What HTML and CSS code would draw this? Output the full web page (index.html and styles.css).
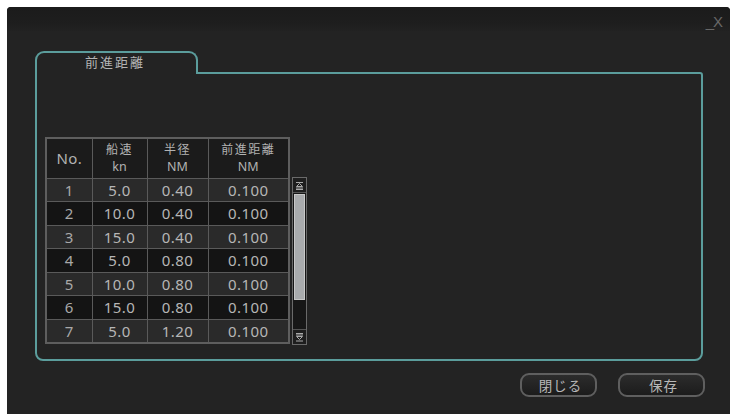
FILE: index.html
```html
<!DOCTYPE html>
<html lang="ja">
<head>
<meta charset="utf-8">
<link rel="stylesheet" href="styles.css">
</head>
<body>
<div class="window">
  <div class="titlebar">
    <span class="winctl">_X</span>
  </div>
  <div class="panel">
    <div class="tabs">
      <div class="tab">前進距離</div>
    </div>
    <div class="panel-body">
      <div class="table-wrap">
        <table class="grid">
          <thead>
            <tr>
              <th class="c-no">No.</th>
              <th class="c-sp"><span class="hl jp">船速</span><span class="hl">kn</span></th>
              <th class="c-r"><span class="hl jp">半径</span><span class="hl">NM</span></th>
              <th class="c-d"><span class="hl jp">前進距離</span><span class="hl">NM</span></th>
            </tr>
          </thead>
          <tbody>
            <tr class="odd"><td>1</td><td>5.0</td><td>0.40</td><td>0.100</td></tr>
            <tr class="even"><td>2</td><td>10.0</td><td>0.40</td><td>0.100</td></tr>
            <tr class="odd"><td>3</td><td>15.0</td><td>0.40</td><td>0.100</td></tr>
            <tr class="even"><td>4</td><td>5.0</td><td>0.80</td><td>0.100</td></tr>
            <tr class="odd"><td>5</td><td>10.0</td><td>0.80</td><td>0.100</td></tr>
            <tr class="even"><td>6</td><td>15.0</td><td>0.80</td><td>0.100</td></tr>
            <tr class="odd"><td>7</td><td>5.0</td><td>1.20</td><td>0.100</td></tr>
          </tbody>
        </table>
        <div class="scrollbar">
          <div class="sb-btn">
            <svg width="11" height="11" viewBox="0 0 11 11"><path d="M2 2.5h7M5.5 3.5 2.5 6.5h6z M2 8h7M2 9.5h7" stroke="#aaa" stroke-width="1" fill="none"/></svg>
          </div>
          <div class="sb-track">
            <div class="sb-thumb"></div>
          </div>
          <div class="sb-btn">
            <svg width="11" height="11" viewBox="0 0 11 11"><path d="M2 1.5h7M2 3h7M2.5 4.5h6L5.5 7.5z M2 9h7" stroke="#aaa" stroke-width="1" fill="none"/></svg>
          </div>
        </div>
      </div>
    </div>
  </div>
  <div class="footer">
    <button class="btn btn-close">閉じる</button>
    <button class="btn btn-save">保存</button>
  </div>
</div>
</body>
</html>
```

FILE: styles.css
```css
* { box-sizing: border-box; }

html, body {
  margin: 0;
  padding: 0;
  background: #ffffff;
}

body {
  font-family: "Noto Sans", "Noto Sans CJK JP", sans-serif;
  color: #bdbdbd;
}

.window {
  margin: 7px 5px 0 7px;
  height: 407px;
  background: #232323;
  border-radius: 4px 4px 0 0;
  display: flex;
  flex-direction: column;
}

.titlebar {
  height: 24px;
  background: linear-gradient(#1b1b1b, #1e1e1e 70%, #222222);
  border-radius: 4px 4px 0 0;
  display: flex;
  justify-content: flex-end;
  align-items: center;
  padding: 4px 8px 0 0;
}

.winctl {
  font-family: "Liberation Sans", sans-serif;
  font-size: 15px;
  color: #686868;
  letter-spacing: -1px;
}

.panel {
  margin: 20px 27px 0 28px;
  display: flex;
  flex-direction: column;
}

.tabs {
  display: flex;
  height: 21px;
}

.tab {
  position: relative;
  z-index: 1;
  width: 163px;
  height: 23px;
  border: 2px solid #5b9d9c;
  border-bottom: none;
  border-radius: 9px 9px 0 0;
  background: #232323;
  font-family: "Noto Sans CJK JP", sans-serif;
  font-size: 13px;
  letter-spacing: 2px;
  color: #b3b3b3;
  padding: 1px 0 0 48px;
  line-height: 16px;
}

.panel-body {
  height: 289px;
  border: 2px solid #5b9d9c;
  border-radius: 0 3px 8px 8px;
  padding: 63px 0 0 8px;
}

.table-wrap {
  display: flex;
  align-items: flex-start;
}

.grid {
  border-collapse: collapse;
  border: 2px solid #5e5e5e;
  font-size: 15px;
  letter-spacing: 0.4px;
  color: #b6b6b6;
}

.grid th, .grid td {
  border: 1px solid #5a5a5a;
  text-align: center;
  padding: 0;
}

.grid th {
  height: 40px;
  background: #1b1b1b;
  font-family: "Noto Sans", "Noto Sans CJK JP", sans-serif;
  font-weight: normal;
  color: #b2b2b2;
}

.hl {
  display: block;
  font-size: 12.5px;
  line-height: 18px;
  letter-spacing: 0;
}

.hl.jp {
  font-family: "Noto Sans CJK JP", sans-serif;
  font-size: 12px;
  letter-spacing: 1.5px;
}

.grid th.c-no {
  font-size: 15px;
}

.c-no { width: 46px; }
.c-sp { width: 55px; }
.c-r  { width: 61px; }
.c-d  { width: 81px; }

.grid td {
  height: 23.5px;
  line-height: 18px;
}

.grid tr.odd td { background: #2a2a2a; }
.grid tr.even td { background: #141414; }

.grid td:first-child { color: #a8a8a8; }

.scrollbar {
  margin-left: 2px;
  margin-top: 40px;
  width: 15px;
  height: 168px;
  border: 1px solid #6a6a6a;
  background: #171717;
  display: flex;
  flex-direction: column;
}

.sb-btn {
  height: 14px;
  display: flex;
  align-items: center;
  justify-content: center;
  background: #1e1e1e;
}

.sb-track {
  flex: 1;
  padding: 1px 1px;
  border-top: 1px solid #555;
  border-bottom: 1px solid #555;
}

.sb-thumb {
  height: 106px;
  background: #a9abad;
  border: 1px solid #c8c8c8;
}

.footer {
  display: flex;
  justify-content: flex-end;
  gap: 21px;
  padding: 12px 25px 0 0;
}

.btn {
  height: 24px;
  border: 2px solid #5f5f5f;
  border-radius: 9px;
  background: linear-gradient(#2c2c2c, #1c1c1c);
  color: #b8b8b8;
  font-family: "Noto Sans CJK JP", sans-serif;
  font-size: 13.5px;
  letter-spacing: 1px;
  padding: 0 0 0 4px;
  line-height: 18px;
}

.btn-close { width: 77px; }
.btn-save { width: 87px; }
```
